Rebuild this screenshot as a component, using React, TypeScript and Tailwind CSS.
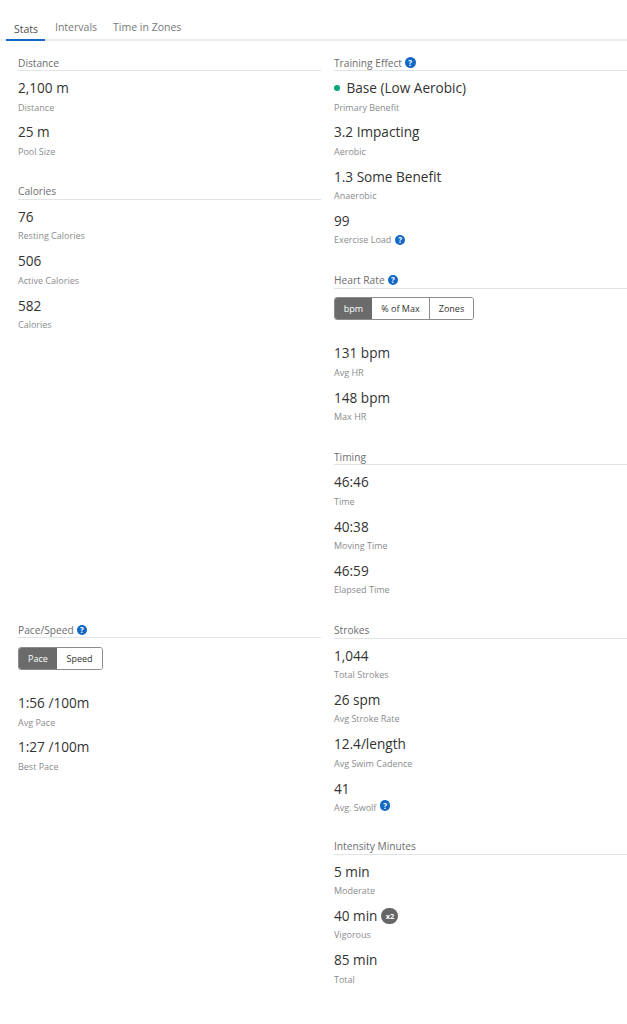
import type { ReactNode } from "react";

const Help = ({ raised }: { raised?: boolean }) => (
  <span className={`inline-flex h-[10.5px] w-[10.5px] items-center justify-center rounded-full bg-[#1268c3] text-[8px] leading-none font-bold text-white ${raised ? "-mt-[4px]" : ""}`}>
    ?
  </span>
);

const Section = ({ title, help, tight, children }: { title: string; help?: boolean; tight?: boolean; children: ReactNode }) => (
  <div className={tight ? "mb-[23.8px]" : "mb-[25.4px]"}>
    <div className="mb-[6px] flex h-[15px] items-center gap-[3px] border-b border-[#e1e3e5] pb-[1px] text-[10.2px] leading-[14px] text-[#6d6e70]">
      <span>{title}</span>
      {help && <Help />}
    </div>
    {children}
  </div>
);

const Stat = ({ value, label, dot, help, raised, badge }: { value: string; label: string; dot?: boolean; help?: boolean; raised?: boolean; badge?: boolean }) => (
  <div className="mb-[6px] h-[38.3px]">
    <div className="flex h-[22px] items-center text-[13.6px] leading-[22px] text-[#333333]">
      {dot && <span className="mr-[7px] h-[5.5px] w-[5.5px] rounded-full bg-[#00a878]" />}
      <span>{value}</span>
      {badge && (
        <span className="ml-[4px] flex h-[16px] w-[17px] items-center justify-center rounded-full bg-[#666666] text-[7.5px] font-bold text-white">
          x2
        </span>
      )}
    </div>
    <div className="mt-[1.5px] flex h-[13px] items-center gap-[3.5px] text-[9px] leading-[13px] text-[#8a8c8e]">
      <span>{label}</span>
      {help && <Help raised={raised} />}
    </div>
  </div>
);

const Toggle = ({ options }: { options: { name: string; width: string }[] }) => (
  <div className="mt-[8.4px] mb-[22.4px] flex h-[23px] w-fit overflow-hidden rounded-[3px] border border-[#8a8c8e] text-center text-[9px] leading-[21px] text-[#333333]">
    {options.map((o, i) => (
      <div key={o.name} className={`${o.width} ${i === 0 ? "bg-[#6b6b6b] text-white" : "bg-white"} ${i > 1 ? "border-l border-[#8a8c8e]" : ""}`}>
        {o.name}
      </div>
    ))}
  </div>
);

export default function App() {
  return (
    <div className="min-h-[1024px] bg-white font-['Open_Sans',sans-serif]">
      <div className="flex h-[41px] items-end border-b-2 border-[#eaeaea] pl-[6px] text-[10.5px] text-[#76787a]">
        <div className="-mb-[2px] w-[39px] border-b-2 border-[#1268c3] pb-[1.5px] pl-[8px] text-[#4d4f51]">Stats</div>
        <div className="ml-[10px] pb-[3.5px]">Intervals</div>
        <div className="ml-[16px] pb-[3.5px]">Time in Zones</div>
      </div>

      <div className="flex gap-[13px] pt-[15px] pl-[18px]">
        <div className="flex w-[303px] flex-col">
          <div className="h-[567.3px]">
            <Section title="Distance">
              <Stat value="2,100 m" label="Distance" />
              <Stat value="25 m" label="Pool Size" />
            </Section>
            <Section title="Calories">
              <Stat value="76" label="Resting Calories" />
              <Stat value="506" label="Active Calories" />
              <Stat value="582" label="Calories" />
            </Section>
          </div>
          <Section title="Pace/Speed" help>
            <Toggle options={[{ name: "Pace", width: "w-[38px]" }, { name: "Speed", width: "w-[45px]" }]} />
            <Stat value="1:56 /100m" label="Avg Pace" />
            <Stat value="1:27 /100m" label="Best Pace" />
          </Section>
        </div>

        <div className="w-[293px]">
          <Section title="Training Effect" help>
            <Stat value="Base (Low Aerobic)" label="Primary Benefit" dot />
            <Stat value="3.2 Impacting" label="Aerobic" />
            <Stat value="1.3 Some Benefit" label="Anaerobic" />
            <Stat value="99" label="Exercise Load" help />
          </Section>
          <Section title="Heart Rate" help>
            <Toggle options={[{ name: "bpm", width: "w-[37px]" }, { name: "% of Max", width: "w-[57px]" }, { name: "Zones", width: "w-[44px]" }]} />
            <Stat value="131 bpm" label="Avg HR" />
            <Stat value="148 bpm" label="Max HR" />
          </Section>
          <Section title="Timing">
            <Stat value="46:46" label="Time" />
            <Stat value="40:38" label="Moving Time" />
            <Stat value="46:59" label="Elapsed Time" />
          </Section>
          <Section title="Strokes" tight>
            <Stat value="1,044" label="Total Strokes" />
            <Stat value="26 spm" label="Avg Stroke Rate" />
            <Stat value="12.4/length" label="Avg Swim Cadence" />
            <Stat value="41" label="Avg. Swolf" help raised />
          </Section>
          <Section title="Intensity Minutes">
            <Stat value="5 min" label="Moderate" />
            <Stat value="40 min" label="Vigorous" badge />
            <Stat value="85 min" label="Total" />
          </Section>
        </div>
      </div>
    </div>
  );
}
